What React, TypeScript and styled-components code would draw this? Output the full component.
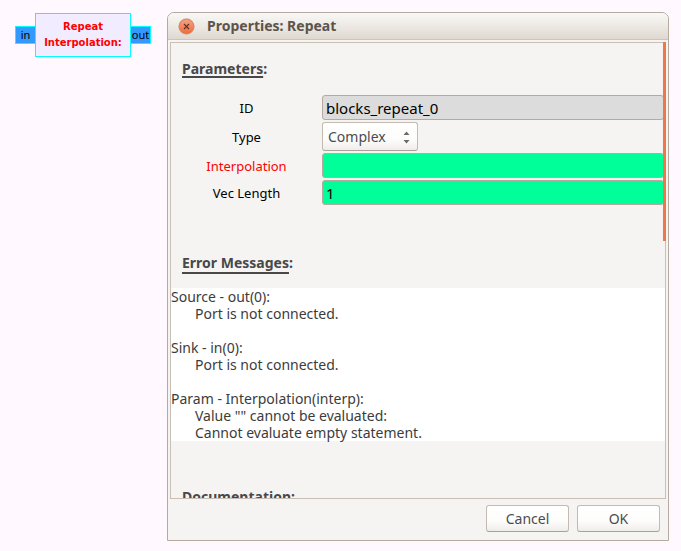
import React from "react";
import styled, { createGlobalStyle } from "styled-components";

const GlobalStyle = createGlobalStyle`
  * { box-sizing: border-box; }
  body {
    margin: 0;
    background: #fff9ff;
    font-family: "Noto Sans", "Open Sans", sans-serif;
    font-size: 14px;
    color: #3c3c3c;
  }
  button, input, select { font: inherit; margin: 0; }
`;

const Page = styled.main`
  display: grid;
  grid-template-columns: 136px minmax(0, 1fr);
  column-gap: 16px;
  height: 100vh;
  padding: 12px 12px 10px 15px;
  align-items: start;
`;

const FlowBlock = styled.div`
  display: flex;
  align-items: center;
  margin-top: 1px;
`;

const Port = styled.span<{ $side: "left" | "right" }>`
  width: 20px;
  height: 18px;
  border: 1px solid #00ffff;
  ${(p) => (p.$side === "left" ? "border-right: 0;" : "border-left: 0;")}
  background: #3399ff;
  color: #000;
  font-size: 11px;
  line-height: 15px;
  text-align: center;
`;

const BlockBody = styled.div`
  flex: 1;
  height: 44px;
  padding-top: 5px;
  border: 1px solid #00ffff;
  background: #f1ecff;
  color: #ff0000;
  font: bold 10px/16px "DejaVu Sans", sans-serif;
  text-align: center;
  white-space: nowrap;
`;

const Dialog = styled.section`
  display: flex;
  flex-direction: column;
  height: 100%;
  min-height: 0;
  border: 1px solid #b5aa9d;
  border-radius: 7px 7px 0 0;
  background: #f5f4f2;
  overflow: hidden;
`;

const TitleBar = styled.header`
  display: flex;
  align-items: center;
  gap: 12px;
  flex: none;
  height: 27px;
  padding-left: 10px;
  border-bottom: 1px solid #cfc5b6;
  background: linear-gradient(#f9f8f6, #eeebe6 45%, #dfd8d0);
`;

const Title = styled.h1`
  margin: 0;
  font-size: 14px;
  line-height: 20px;
  font-weight: bold;
  color: #5c544b;
`;

const CloseButton = styled.button`
  display: flex;
  width: 17px;
  height: 17px;
  padding: 0;
  border: 0;
  background: none;
`;

const Frame = styled.div`
  position: relative;
  flex: 1;
  min-height: 0;
  margin: 2px 2px 0;
  border: 1px solid #c9bfb4;
`;

const Scroller = styled.div`
  height: 100%;
  padding-top: 16px;
  overflow: hidden;
`;

const ScrollThumb = styled.div`
  position: absolute;
  top: -1px;
  right: -1px;
  width: 3px;
  height: 199px;
  background: #f07746;
`;

const Heading = styled.h2<{ $offset: number }>`
  margin: 0 0 0 11px;
  font-size: 14px;
  line-height: 20px;
  font-weight: bold;
  color: #484848;

  span {
    text-decoration: underline;
    text-decoration-thickness: 2px;
    text-decoration-skip-ink: none;
    text-underline-offset: ${(p) => p.$offset}px;
  }
`;

const Parameters = styled.form`
  display: grid;
  grid-template-columns: 151px minmax(0, 1fr);
  row-gap: 2px;
  align-items: center;
  margin: 16px 1px 48px 0;
`;

const Label = styled.label<{ $invalid?: boolean }>`
  font-size: 13px;
  line-height: 18px;
  text-align: center;
  color: ${(p) => (p.$invalid ? "#ff0000" : "#000")};
`;

const TextField = styled.input<{ $fill: string }>`
  width: 100%;
  height: 25px;
  padding: 0 3px;
  border: 1px solid #b5aa9d;
  border-radius: 3px;
  background: ${(p) => p.$fill};
  color: #000;
  font-size: 15px;
  outline: none;
`;

const SelectWrap = styled.div`
  position: relative;
  width: 96px;
  height: 29px;

  svg {
    position: absolute;
    top: 9px;
    right: 8px;
    pointer-events: none;
  }
`;

const raised = `
  border: 1px solid #c4bbb0;
  border-bottom-color: #aca196;
  border-radius: 3px;
  background: linear-gradient(#ffffff, #fdfdfc 60%, #efedea);
  color: #4c4c4c;
`;

const Select = styled.select`
  ${raised}
  appearance: none;
  width: 100%;
  height: 100%;
  padding: 0 5px;
`;

const Messages = styled.pre`
  margin: 15px 0 46px;
  background: #fff;
  font: inherit;
  line-height: 17px;
  tab-size: 24px;
  white-space: pre-wrap;
`;

const Actions = styled.footer`
  display: flex;
  justify-content: flex-end;
  gap: 8px;
  padding: 6px 8px 8px;
`;

const Button = styled.button`
  ${raised}
  width: 83px;
  height: 27px;
  padding: 0;
`;

const messages = `Source - out(0):
\tPort is not connected.

Sink - in(0):
\tPort is not connected.

Param - Interpolation(interp):
\tValue "" cannot be evaluated:
\tCannot evaluate empty statement.`;

const CloseIcon = () => (
  <svg width="17" height="17" viewBox="0 0 17 17" aria-hidden="true">
    <defs>
      <linearGradient id="closeFill" x1="0" y1="0" x2="0" y2="1">
        <stop offset="0" stopColor="#f5a283" />
        <stop offset="1" stopColor="#ef6b3a" />
      </linearGradient>
    </defs>
    <circle cx="8.5" cy="8.5" r="8.2" fill="#d8b5a5" />
    <circle cx="8.5" cy="8.5" r="7.3" fill="url(#closeFill)" stroke="#d97957" strokeWidth="0.7" />
    <path d="M6 6 L11 11 M11 6 L6 11" stroke="#5a3527" strokeWidth="1.1" />
  </svg>
);

export default function App() {
  return (
    <>
      <GlobalStyle />
      <Page>
        <FlowBlock>
          <Port $side="left">in</Port>
          <BlockBody>
            Repeat
            <br />
            Interpolation:
          </BlockBody>
          <Port $side="right">out</Port>
        </FlowBlock>
        <Dialog role="dialog" aria-labelledby="dialog-title">
          <TitleBar>
            <CloseButton type="button" aria-label="Close">
              <CloseIcon />
            </CloseButton>
            <Title id="dialog-title">Properties: Repeat</Title>
          </TitleBar>
          <Frame>
            <Scroller>
              <Heading $offset={2}>
                <span>Parameters</span>:
              </Heading>
              <Parameters>
                <Label htmlFor="block-id">ID</Label>
                <TextField id="block-id" $fill="#dcdcdc" defaultValue="blocks_repeat_0" readOnly />
                <Label htmlFor="block-type">Type</Label>
                <SelectWrap>
                  <Select id="block-type" defaultValue="Complex">
                    <option>Complex</option>
                  </Select>
                  <svg width="7" height="13" viewBox="0 0 7 13" aria-hidden="true">
                    <path d="M0.5 4 L3.5 0.5 L6.5 4 Z M0.5 9 L3.5 12.5 L6.5 9 Z" fill="#6b6b6b" />
                  </svg>
                </SelectWrap>
                <Label htmlFor="interpolation" $invalid>
                  Interpolation
                </Label>
                <TextField id="interpolation" $fill="#00ff99" defaultValue="" />
                <Label htmlFor="vec-length">Vec Length</Label>
                <TextField id="vec-length" $fill="#00ff99" defaultValue="1" />
              </Parameters>
              <Heading $offset={4}>
                <span>Error Messages</span>:
              </Heading>
              <Messages>{messages}</Messages>
              <Heading $offset={2}>
                <span>Documentation</span>:
              </Heading>
            </Scroller>
            <ScrollThumb />
          </Frame>
          <Actions>
            <Button type="button">Cancel</Button>
            <Button type="button">OK</Button>
          </Actions>
        </Dialog>
      </Page>
    </>
  );
}
